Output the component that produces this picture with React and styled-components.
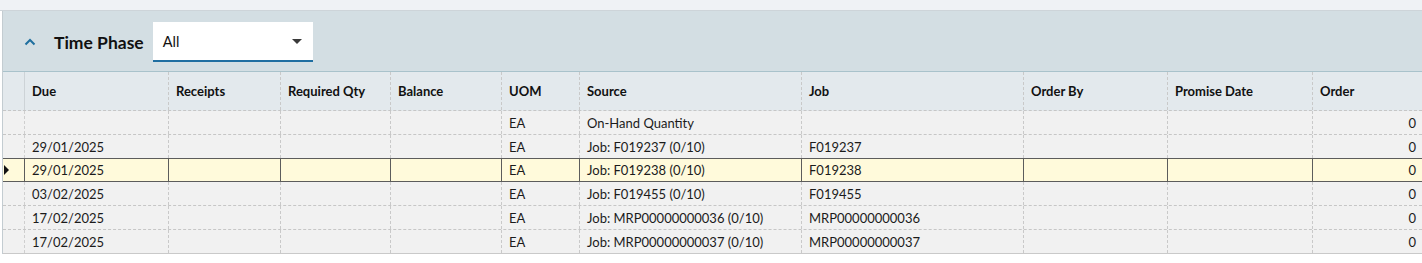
import React from "react";
import styled, { createGlobalStyle } from "styled-components";

const Global = createGlobalStyle`
  html, body { margin: 0; padding: 0; background: #ffffff; }
  body { font-family: "Lato", "Noto Sans", sans-serif; color: #1b1b1b; }
  * { box-sizing: border-box; }
`;

const Page = styled.div`
  width: 1422px;
  height: 263px;
  overflow: hidden;
  background: #ffffff;
`;

const TopStrip = styled.div`
  height: 11px;
  background: #eff2f5;
  border-bottom: 1px solid #cdd4d9;
`;

const Panel = styled.section`
  margin-left: 2px;
  border-left: 1px solid #c3ccd1;
`;

const PanelHeader = styled.header`
  height: 61px;
  background: #d3dee3;
  border-bottom: 1px solid #a9c2cb;
  display: flex;
  align-items: center;
  padding: 2px 0 0 20px;
`;

const Collapse = styled.button`
  border: 0;
  background: transparent;
  padding: 0;
  width: 14px;
  height: 14px;
  display: flex;
  align-items: center;
  justify-content: center;
  color: #1f6f9f;
  cursor: pointer;
`;

const Title = styled.h2`
  margin: 0 9px 0 17px;
  font-size: 17.5px;
  font-weight: 700;
  color: #111;
`;

const Select = styled.div`
  width: 160px;
  height: 40px;
  background: #fff;
  border-bottom: 2px solid #1f6ea1;
  display: flex;
  align-items: center;
  justify-content: space-between;
  padding: 0 11px 0 10px;
  font-size: 14.5px;
  color: #111;
`;

const Caret = styled.span`
  width: 0;
  height: 0;
  border-left: 5px solid transparent;
  border-right: 5px solid transparent;
  border-top: 5px solid #3a3a3a;
`;

const COLS = "22px 144px 112px 110px 111px 78px 222px 222px 144px 145px 1fr";

const Row = styled.div`
  display: grid;
  grid-template-columns: ${COLS};
  height: ${(p) => (p.$head ? "39px" : "24px")};
  background: ${(p) => (p.$head ? "#e3e9ed" : p.$selected ? "#fffadb" : "#f1f1f1")};
  border-bottom: 1px ${(p) => (p.$last ? "solid #c9c9c9" : p.$selected ? "solid #5c5c5c" : "dashed #c6c6c6")};
  border-top: ${(p) => (p.$selected ? "1px solid #5c5c5c" : "0")};
  margin-top: ${(p) => (p.$selected ? "-1px" : "0")};
`;

const Cell = styled.div`
  display: flex;
  align-items: center;
  justify-content: ${(p) => (p.$num ? "flex-end" : "flex-start")};
  padding: 0 ${(p) => (p.$num ? "6px" : "8px")} 0 7px;
  font-size: 13px;
  font-weight: ${(p) => (p.$head ? 700 : 400)};
  color: ${(p) => (p.$head ? "#111" : "#1b1b1b")};
  white-space: nowrap;
  overflow: hidden;
  border-right: 1px ${(p) => (p.$selected ? "solid #5c5c5c" : "dashed #c9c9c9")};
  &:last-child { border-right: 0; }
`;

const Selector = styled(Cell)`
  padding: 0;
  justify-content: flex-start;
  border-right: 1px ${(p) => (p.$selected ? "solid #5c5c5c" : p.$head ? "solid #cdd3d7" : "dashed #cfcfcf")};
`;

const Pointer = styled.span`
  width: 0;
  height: 0;
  border-top: 5px solid transparent;
  border-bottom: 5px solid transparent;
  border-left: 5px solid #111;
  margin-left: 1px;
`;

const headers = ["Due", "Receipts", "Required Qty", "Balance", "UOM", "Source", "Job", "Order By", "Promise Date", "Order"];

const rows = [
  { due: "", src: "On-Hand Quantity", job: "" },
  { due: "29/01/2025", src: "Job: F019237 (0/10)", job: "F019237" },
  { due: "29/01/2025", src: "Job: F019238 (0/10)", job: "F019238", selected: true },
  { due: "03/02/2025", src: "Job: F019455 (0/10)", job: "F019455" },
  { due: "17/02/2025", src: "Job: MRP00000000036 (0/10)", job: "MRP00000000036" },
  { due: "17/02/2025", src: "Job: MRP00000000037 (0/10)", job: "MRP00000000037" },
];

export default function App() {
  return (
    <Page>
      <Global />
      <TopStrip />
      <Panel>
        <PanelHeader>
          <Collapse aria-label="collapse">
            <svg width="12" height="8" viewBox="0 0 12 8">
              <path d="M1.5 6.5 L6 2 L10.5 6.5" fill="none" stroke="currentColor" strokeWidth="2" />
            </svg>
          </Collapse>
          <Title>Time Phase</Title>
          <Select>
            <span>All</span>
            <Caret />
          </Select>
        </PanelHeader>
        <Row $head>
          <Selector $head />
          {headers.map((h) => (
            <Cell key={h} $head>{h}</Cell>
          ))}
        </Row>
        {rows.map((r, i) => {
          const s = !!r.selected;
          return (
            <Row key={i} $selected={s} $last={i === rows.length - 1}>
              <Selector $selected={s}>{s && <Pointer />}</Selector>
              <Cell $selected={s}>{r.due}</Cell>
              <Cell $selected={s} />
              <Cell $selected={s} />
              <Cell $selected={s} />
              <Cell $selected={s}>EA</Cell>
              <Cell $selected={s}>{r.src}</Cell>
              <Cell $selected={s}>{r.job}</Cell>
              <Cell $selected={s} />
              <Cell $selected={s} />
              <Cell $selected={s} $num>0</Cell>
            </Row>
          );
        })}
      </Panel>
    </Page>
  );
}
